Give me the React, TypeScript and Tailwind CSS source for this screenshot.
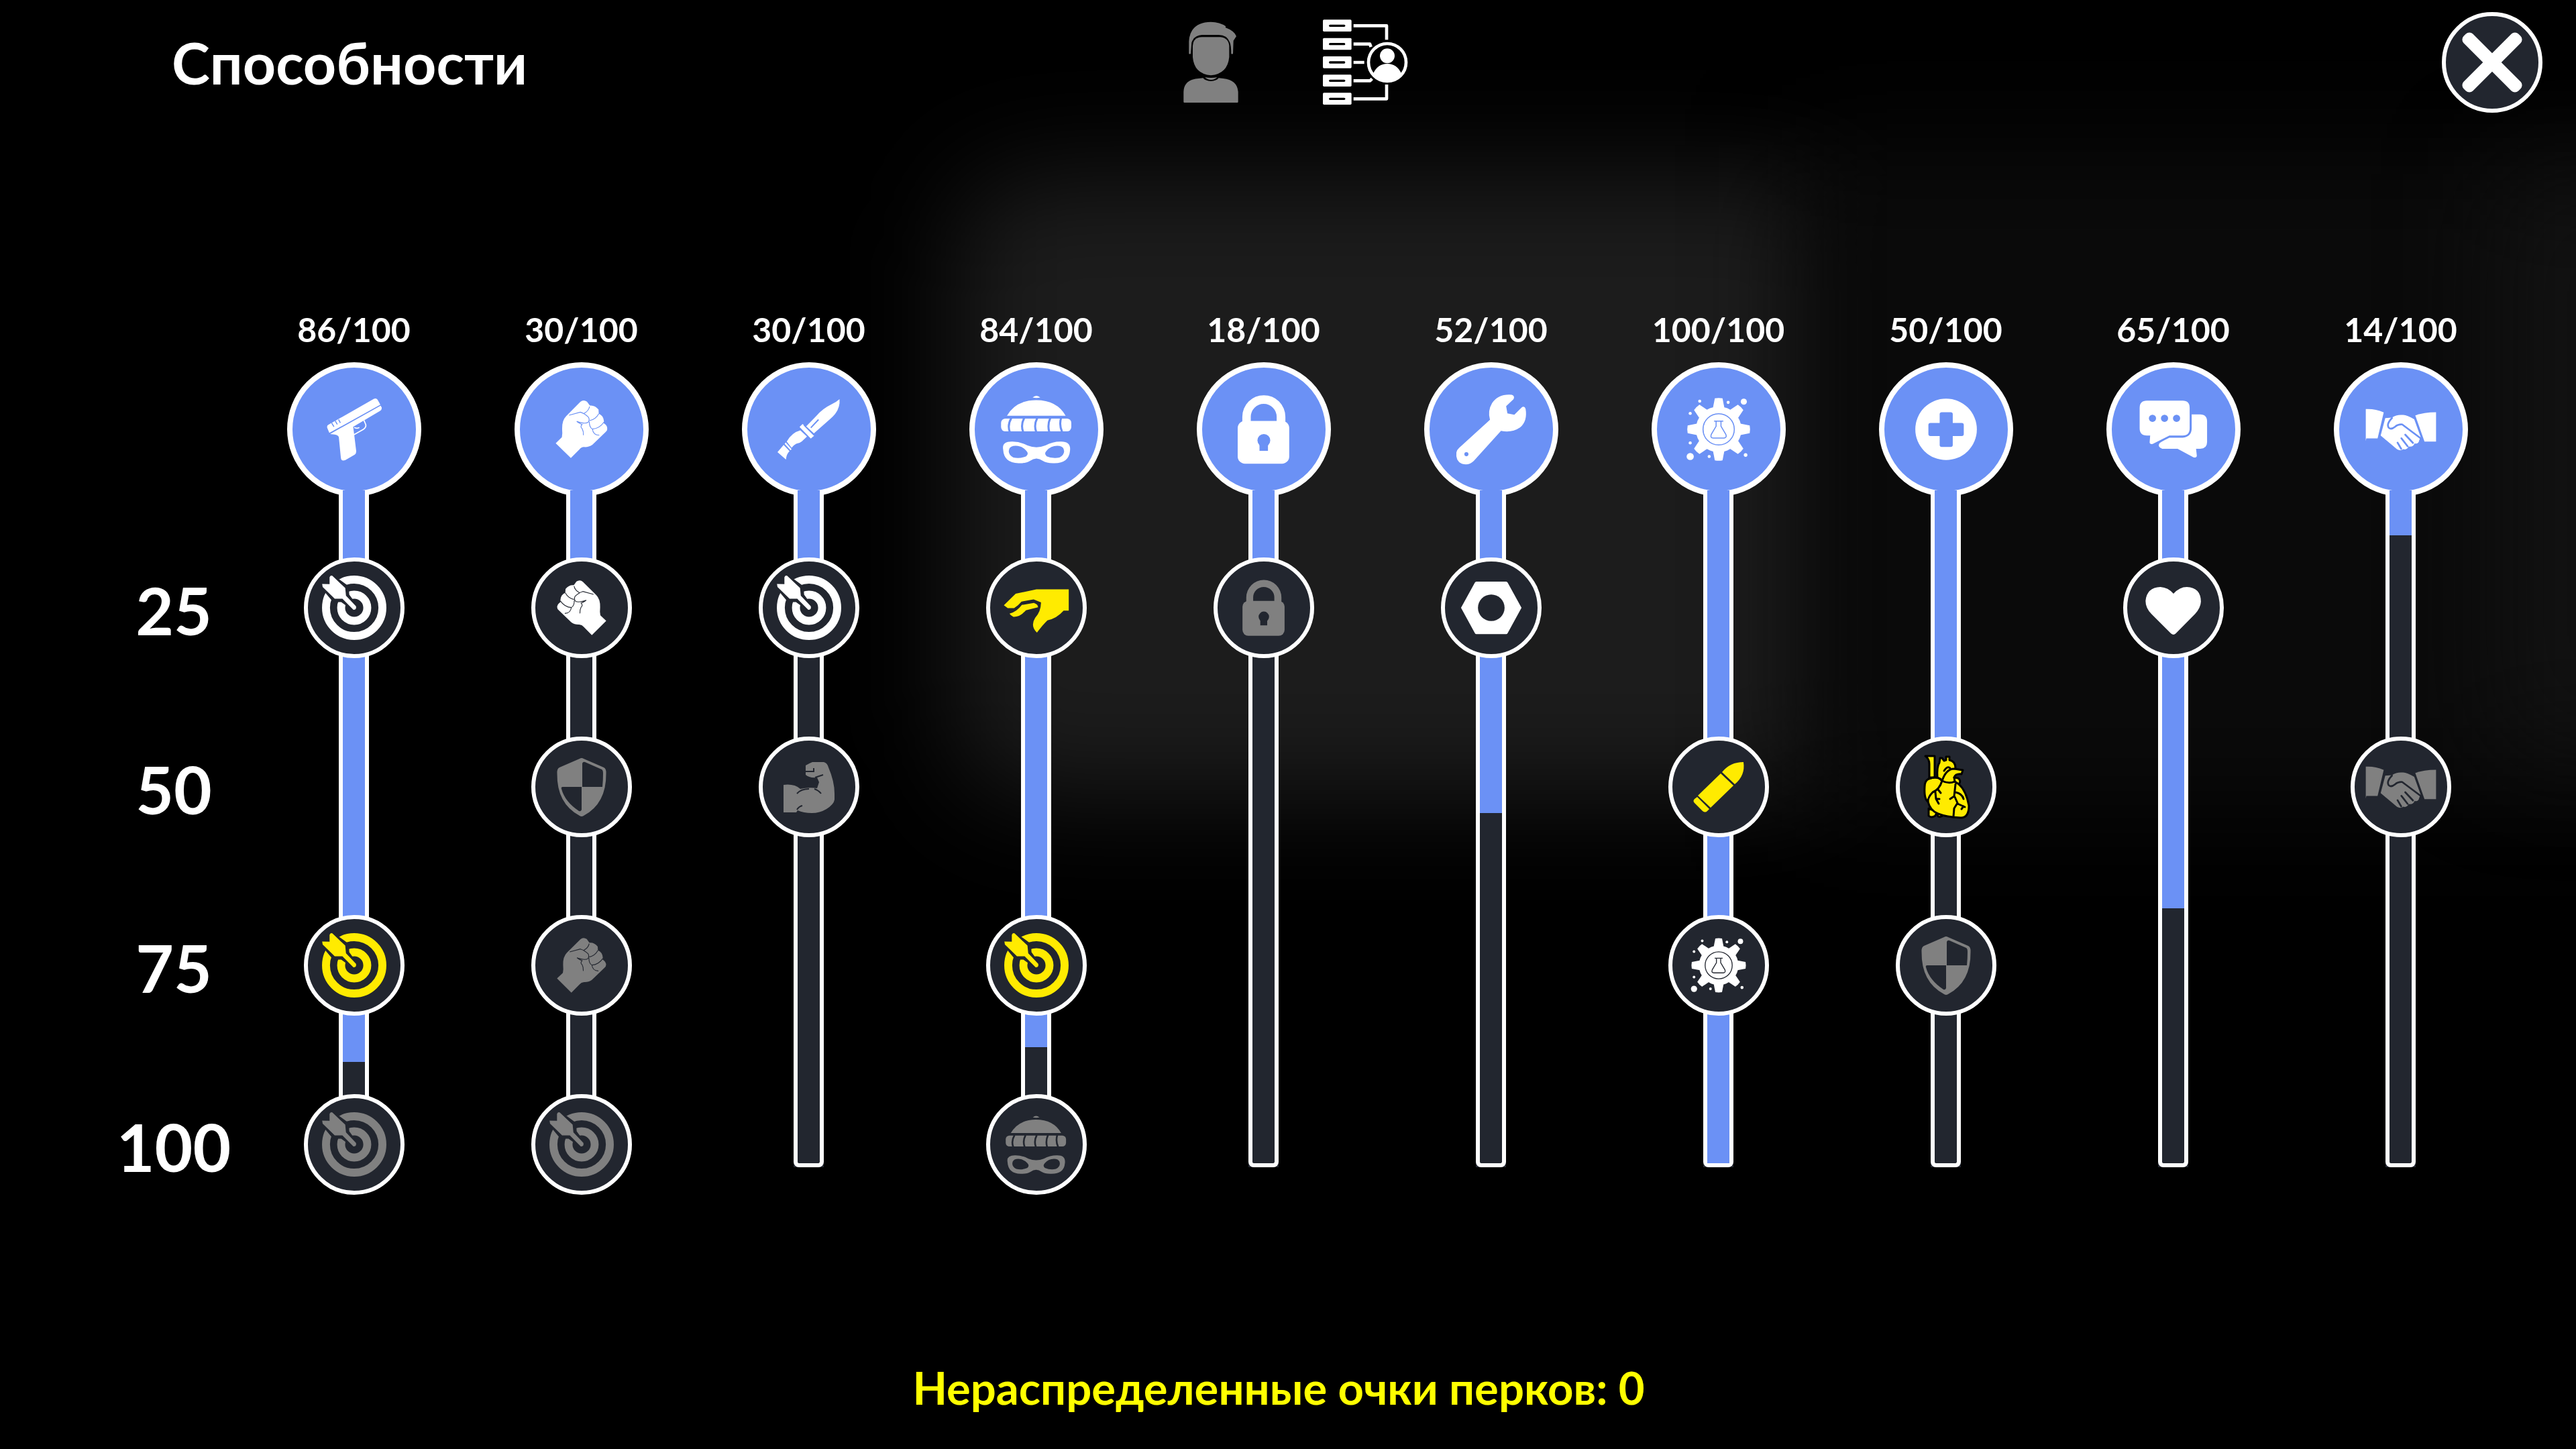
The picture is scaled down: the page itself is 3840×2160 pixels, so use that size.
import type { ReactNode } from "react";

const BLUE = "#6b91f5";
const DARK = "#22262f";

type IconProps = { bg: string };
type IconDef = { viewBox: string; draw: (p: IconProps) => ReactNode };

const icons: Record<string, IconDef> = {
  pistol: {
    viewBox: "177 365 314 314",
    draw: ({ bg }) => (
      <>
        <path d="M229 517Q226 508 234 504L411 403Q420 399 425 406L436 426L237 536Z" />
        <path d="M240 540L437 430L441 436Q443 445 435 450L330 512L334 543L342 608Q342 617 336 621L300 642Q283 648 282 633L274 552Q270 543 258 542Z" />
        <path d="M246 497l9 15M260 489l8 14M273 484l7 13" stroke={bg} strokeWidth="4" />
        <path d="M333 543L370 522Q382 513 379 503L372 487M334 515Q345 520 354 515" fill="none" stroke="currentColor" strokeWidth="4.5" />
      </>
    ),
  },
  fist: {
    viewBox: "1063 365 314 314",
    draw: ({ bg }) => (
      <>
        <path d="M1119 576L1143 553Q1146 540 1144 520Q1143 487 1160 470L1215 415Q1227 405 1241 414L1252 429Q1272 427 1286 445L1287 461Q1305 468 1307 490L1306 498Q1322 508 1320 522Q1320 528 1313 533L1262 582Q1248 592 1230 591Q1218 592 1212 600L1178 634Z" />
        <path
          d="M1171 467L1215 455Q1232 460 1247 475Q1252 485 1246 494Q1235 503 1201 491Q1216 501 1222 503Q1213 512 1222 519Q1228 530 1227 545M1251 433Q1248 450 1229 460M1287 461Q1275 483 1251 488M1307 494Q1290 519 1262 521Q1250 515 1250 492M1262 520Q1265 545 1289 545"
          fill="none"
          stroke={bg}
          strokeWidth="3"
        />
      </>
    ),
  },
  knife: {
    viewBox: "173 365 314 314",
    draw: ({ bg }) => (
      <>
        <path d="M319 510L358 470Q385 440 415 426Q436 416 449 404Q452 435 432 462Q424 472 412 482L349 538Z" />
        <path d="M337 516L367 484" stroke={bg} strokeWidth="5" />
        <path d="M293 513L305 501L350 547L337 558Z" />
        <path d="M310 506L350 546" stroke={bg} strokeWidth="3" />
        <path d="M296 526L322 550L302 569Q293 577 280 578Q270 583 262 594L243 570Q262 535 296 526Z" />
        <path d="M239 573L262 599L258 604L235 579Z" />
        <path d="M231 583L254 607Q241 620 240 640L207 611Z" />
      </>
    ),
  },
  thief: {
    viewBox: "1058 365 314 314",
    draw: ({ bg }) => (
      <>
        <path d="M1200 398Q1215 384 1230 398Q1215 401 1200 398Z" />
        <path d="M1100 469Q1135 408 1214 408Q1295 408 1329 469Z" />
        <rect x="1077" y="480" width="274" height="50" rx="17" />
        <path
          d="M1117 478Q1101 505 1111 532M1167 478Q1153 505 1163 532M1218 478Q1204 505 1214 532M1269 478Q1257 505 1265 532M1311 478Q1303 505 1315 532"
          fill="none"
          stroke={bg}
          strokeWidth="8"
        />
        <path
          fillRule="evenodd"
          d="M1085 600Q1080 570 1118 570Q1150 569 1180 585Q1215 599 1250 585Q1280 569 1312 570Q1350 570 1346 605Q1342 654 1285 654Q1255 655 1240 645Q1215 626 1190 645Q1175 655 1145 654Q1088 654 1085 600ZM1107 607Q1108 590 1125 587Q1155 583 1175 605Q1187 617 1175 627Q1150 638 1125 632Q1107 622 1107 607ZM1323 607Q1322 590 1305 587Q1275 583 1255 605Q1243 617 1255 627Q1280 638 1305 632Q1323 622 1323 607Z"
        />
      </>
    ),
  },
  lock: {
    viewBox: "167 365 314 314",
    draw: ({ bg }) => (
      <>
        <path d="M240 510V473A84 84 0 0 1 408 473V510H374V473A50 50 0 0 0 273 473V510Z" />
        <rect x="222" y="489" width="201" height="167" rx="28" />
        <g fill={bg}>
          <circle cx="324" cy="565" r="25" />
          <rect x="307" y="578" width="33" height="28" />
        </g>
      </>
    ),
  },
  wrench: {
    viewBox: "1053 365 314 314",
    draw: ({ bg }) => (
      <>
        <path d="M1205 485Q1195 450 1213 420Q1237 383 1290 387Q1303 392 1297 404L1268 432L1273 460L1300 465L1329 436Q1340 430 1344 442Q1352 490 1322 515Q1290 537 1248 528L1142 645Q1122 665 1095 656Q1070 645 1074 612Q1076 602 1085 594Z" />
        <circle cx="1113" cy="619" r="8" fill={bg} />
      </>
    ),
  },
  gear: {
    viewBox: "162 365 314 314",
    draw: ({ bg }) => (
      <>
        <circle cx="319" cy="522" r="89" />
        {[0, 45, 90, 135, 180, 225, 270, 315].map((a) => (
          <path key={a} d="M304 401Q319 398 334 401L341 437H297Z" transform={`rotate(${a} 319 522)`} />
        ))}
        <circle cx="319" cy="522" r="61" fill="none" stroke={bg} strokeWidth="4" />
        <path
          d="M301 490H337M309 490V510L290 542Q285 556 298 556H340Q352 554 347 542L328 510V490"
          fill="none"
          stroke={bg}
          strokeWidth="4"
        />
        <circle cx="245" cy="412" r="6" />
        <circle cx="208" cy="460" r="6" />
        <circle cx="356" cy="417" r="6" />
        <circle cx="417" cy="414" r="12" />
        <circle cx="208" cy="575" r="6" />
        <circle cx="208" cy="628" r="14" />
        <circle cx="282" cy="628" r="6" />
        <circle cx="424" cy="622" r="7" />
      </>
    ),
  },
  medic: {
    viewBox: "1047 365 314 314",
    draw: ({ bg }) => (
      <>
        <circle cx="1204" cy="522" r="120" />
        <g fill={bg}>
          <rect x="1179" y="455" width="51" height="136" rx="8" />
          <rect x="1135" y="497" width="138" height="51" rx="8" />
        </g>
      </>
    ),
  },
  chat: {
    viewBox: "209 365 314 314",
    draw: ({ bg }) => (
      <>
        <path d="M262 410H402Q429 410 429 438V518Q429 546 402 546H350L285 579Q272 581 273 572L275 546H262Q234 546 234 518V438Q234 410 262 410Z" />
        <path d="M437 464H470Q497 464 497 492V572Q497 598 470 598H454L457 625Q456 635 444 631L382 598H322Q304 590 310 578Q313 573 350 555H402Q437 550 437 518Z" />
        <g fill={bg}>
          <circle cx="284" cy="479" r="14" />
          <circle cx="331" cy="479" r="14" />
          <circle cx="378" cy="479" r="14" />
        </g>
      </>
    ),
  },
  handshake: {
    viewBox: "1094 365 314 314",
    draw: ({ bg }) => (
      <>
        <path d="M1114 443Q1150 441 1184 456L1160 557H1116L1114 568Z" />
        <path d="M1388 455Q1340 455 1307 468L1343 570H1388Z" />
        <path d="M1190 478L1216 476Q1235 463 1260 466Q1275 467 1303 483L1328 552L1322 566Q1320 580 1304 577Q1300 592 1281 589Q1274 604 1260 599Q1250 608 1236 600L1172 546Z" />
        <path
          d="M1216 478Q1194 500 1203 515Q1212 525 1228 512Q1240 502 1256 503L1332 560M1268 543L1298 575M1253 557L1277 588M1238 574L1252 598"
          fill="none"
          stroke={bg}
          strokeWidth="7"
          strokeLinecap="round"
        />
      </>
    ),
  },
  target: {
    viewBox: "177 1062 314 314",
    draw: ({ bg }) => (
      <>
        <circle cx="334" cy="1219" r="110" fill="none" stroke="currentColor" strokeWidth="31" />
        <circle cx="334" cy="1219" r="51" fill="none" stroke="currentColor" strokeWidth="31" />
        <path
          d="M213 1130L243 1100L300 1142L302 1172L336 1219L288 1184L258 1184Z"
          fill={bg}
          stroke={bg}
          strokeWidth="26"
          strokeLinejoin="round"
        />
        <path d="M209 1126L238 1127L238 1100Q243 1089 252 1097L299 1142L302 1172L341 1213Q344 1227 331 1227L288 1184L258 1184L211 1138Z" />
      </>
    ),
  },
  grab: {
    viewBox: "1058 1062 314 314",
    draw: () => (
      <>
        <path d="M1341 1147V1230H1321Q1295 1260 1258 1268Q1240 1285 1217 1316Q1190 1290 1210 1258Q1232 1235 1233 1198L1204 1186L1157 1195Q1145 1210 1128 1220H1103L1088 1209L1134 1164L1215 1147Z" />
        <path d="M1110 1242Q1138 1235 1158 1208L1205 1200Q1222 1206 1221 1217L1174 1229Q1150 1256 1125 1254Q1115 1250 1110 1242Z" />
      </>
    ),
  },
  nut: {
    viewBox: "1053 1062 314 314",
    draw: ({ bg }) => (
      <>
        <path d="M1152 1117H1268Q1272 1117 1274 1121L1328 1219L1274 1318Q1272 1322 1268 1322H1152Q1148 1322 1146 1318L1092 1219L1146 1121Q1148 1117 1152 1117Z" />
        <circle cx="1210" cy="1219" r="52" fill={bg} />
      </>
    ),
  },
  heart: {
    viewBox: "209 1062 314 314",
    draw: () => (
      <path d="M366 1164Q390 1138 418 1138Q472 1140 473 1195Q472 1220 450 1243L375 1319Q366 1328 356 1319L280 1243Q257 1220 257 1192Q262 1140 315 1138Q345 1140 366 1164Z" />
    ),
  },
  shield: {
    viewBox: "-60 -60 120 120",
    draw: ({ bg }) => (
      <>
        <path d="M-3 -42Q0 -44 3 -42L33 -29Q37 -27 36.500 -20Q37 25 3 43Q0 45 -3 43Q-37 25 -36.500 -20Q-37 -27 -33 -29Z" />
        <path
          d="M1 0V-35Q2 -38 5 -37L30 -26Q32 -25 32 -20Q32 -10 31 0ZM0 0V34Q-1 37 -4 36Q-25 22 -30 3Q-31 0 -28 0Z"
          fill={bg}
        />
      </>
    ),
  },
  muscle: {
    viewBox: "-60 -60 120 120",
    draw: ({ bg }) => (
      <>
        <path d="M-38 -3Q-22 -5 -13 3Q0 0 12 2L15 -7L12 -14Q0 -13 -5 -18V-32Q0 -35 5 -37H22Q27 -36 29 -29Q38 -8 38 10V19Q37 26 26 33Q16 39 4 39Q-8 39 -17 35L-19 38H-38Z" />
        <path
          d="M-18 10Q-12 3 0 3M18 10Q14 5 8 3M-18 34Q-15 29 -10 28M-6 -23H7V-28M9 -14L21 -18"
          fill="none"
          stroke={bg}
          strokeWidth="2"
        />
      </>
    ),
  },
  bullet: {
    viewBox: "-60 -60 120 120",
    draw: () => (
      <>
        <path d="M5 -22Q17 -37 37 -37Q40 -17 24 -4Z" />
        <path d="M3 -20L22 -2L-12 31L-31 13Z" />
        <path d="M-32 15L-14 33L-17 36Q-20 39 -24 36L-36 24Q-39 21 -36 18Z" />
      </>
    ),
  },
  organ: {
    viewBox: "-60 -60 120 120",
    draw: () => (
      <g stroke="#000" strokeWidth="3" strokeLinejoin="round" strokeLinecap="round">
        <path d="M-31 -46H-17V-14H-25V-34Q-25 -42 -31 -46Z" />
        <path d="M-26 32V43Q-22 47 -16 43L-14 38L-12 44Q-8 46 -4 42Z" />
        <path d="M-13 -14Q-14 -30 -10 -36L-9 -43H-6L-3 -39L0 -40V-45H5V-40Q14 -38 14 -28L6 -20Q0 -12 -6 -10Z" />
        <path d="M-26 -12Q-12 -17 -6 -9Q0 -27 12 -27L25 -25L23 -19Q14 -20 12 -14L18 -13Q23 -9 19 -4Q30 6 34 28Q34 46 22 46Q0 45 -12 40Q-24 35 -27 22Q-33 18 -32 0Q-32 -9 -26 -12Z" />
        <path
          d="M-26 -12Q-12 -17 -6 -9Q-10 4 -20 8Q-27 15 -27 22M-6 -9Q4 -4 13 -8L12 -14M13 -8L19 -4M14 -4L12 14L6 18M13 15L17 24L12 32L11 44M17 25L28 30M23 33L26 29M14 8Q24 10 26 18M-16 8L-15 18L-10 18M-15 18L-11 25M-12 4L-8 9M-3 -24Q2 -32 6 -28"
          fill="none"
        />
      </g>
    ),
  },
};

const tones = {
  white: "text-white",
  gray: "text-[#808080]",
  yellow: "text-[#ffeb00]",
};

function Icon({ name, bg, size = 120, flip }: { name: string; bg: string; size?: number; flip?: boolean }) {
  const icon = icons[name];
  return (
    <svg
      viewBox={icon.viewBox}
      fill="currentColor"
      aria-hidden="true"
      className={flip ? "-scale-x-100" : ""}
      style={{ width: size, height: size }}
    >
      {icon.draw({ bg })}
    </svg>
  );
}

type Perk = { at: number; icon: string; tone: keyof typeof tones; size?: number; flip?: boolean };
type Skill = { id: string; name: string; value: number; perks: Perk[] };

const skills: Skill[] = [
  {
    id: "pistol",
    name: "Стрельба",
    value: 86,
    perks: [
      { at: 25, icon: "target", tone: "white" },
      { at: 75, icon: "target", tone: "yellow" },
      { at: 100, icon: "target", tone: "gray" },
    ],
  },
  {
    id: "fist",
    name: "Рукопашный бой",
    value: 30,
    perks: [
      { at: 25, icon: "fist", tone: "white", size: 114, flip: true },
      { at: 50, icon: "shield", tone: "gray" },
      { at: 75, icon: "fist", tone: "gray", size: 114 },
      { at: 100, icon: "target", tone: "gray" },
    ],
  },
  {
    id: "knife",
    name: "Холодное оружие",
    value: 30,
    perks: [
      { at: 25, icon: "target", tone: "white" },
      { at: 50, icon: "muscle", tone: "gray" },
    ],
  },
  {
    id: "thief",
    name: "Воровство",
    value: 84,
    perks: [
      { at: 25, icon: "grab", tone: "yellow" },
      { at: 75, icon: "target", tone: "yellow" },
      { at: 100, icon: "thief", tone: "gray", size: 103 },
    ],
  },
  { id: "lock", name: "Взлом", value: 18, perks: [{ at: 25, icon: "lock", tone: "gray", size: 98 }] },
  { id: "wrench", name: "Ремонт", value: 52, perks: [{ at: 25, icon: "nut", tone: "white" }] },
  {
    id: "gear",
    name: "Наука",
    value: 100,
    perks: [
      { at: 50, icon: "bullet", tone: "yellow" },
      { at: 75, icon: "gear", tone: "white", size: 104 },
    ],
  },
  {
    id: "medic",
    name: "Медицина",
    value: 50,
    perks: [
      { at: 50, icon: "organ", tone: "yellow" },
      { at: 75, icon: "shield", tone: "gray" },
    ],
  },
  { id: "chat", name: "Красноречие", value: 65, perks: [{ at: 25, icon: "heart", tone: "white" }] },
  { id: "handshake", name: "Торговля", value: 14, perks: [{ at: 50, icon: "handshake", tone: "gray" }] },
];

// The scale starts under the round head, so the visible track is shorter than 0–100.
const SCALE = 1089;
const HIDDEN = 85;

function fillHeight(value: number) {
  return Math.min(Math.round((value / 100) * SCALE) - HIDDEN, 1003);
}

function perkTop(at: number) {
  return Math.round(((at - 25) / 25) * 266.6) + 100;
}

function SkillColumn({ skill }: { skill: Skill }) {
  return (
    <li className="flex flex-col items-center">
      <span className="text-[50px] leading-[64px]">{skill.value}/100</span>
      <button
        type="button"
        aria-label={skill.name}
        className="mt-[17px] flex size-[200px] items-center justify-center rounded-full border-8 border-white bg-[#6b91f5]"
      >
        <Icon name={skill.id} bg={BLUE} />
      </button>
      <div className="relative -mt-[9px] h-[1009px] w-[45px] bg-[#22262f]">
        <div
          role="progressbar"
          aria-label={skill.name}
          aria-valuenow={skill.value}
          className="h-full rounded-b-lg border-6 border-t-0 border-white"
        >
          <div className="bg-[#6b91f5]" style={{ height: fillHeight(skill.value) }} />
        </div>
        {skill.perks.map((perk) => (
          <button
            key={perk.at}
            type="button"
            aria-label={`${skill.name}: ${perk.at}`}
            className={`absolute left-1/2 flex size-[150px] -translate-x-1/2 items-center justify-center rounded-full border-6 border-white bg-[#22262f] ${tones[perk.tone]}`}
            style={{ top: perkTop(perk.at) }}
          >
            <Icon name={perk.icon} bg={DARK} size={perk.size} flip={perk.flip} />
          </button>
        ))}
      </div>
    </li>
  );
}

function PersonIcon() {
  return (
    <svg viewBox="123 87 384 384" fill="currentColor" className="size-32" aria-hidden="true">
      <path d="M217 240V185Q222 100 315 98Q355 98 382 118L380 123Q420 138 429 162L416 182L414 240Q410 243 406 240Q406 205 400 190Q388 156 350 156H275Q240 158 229 190L225 240Q221 243 217 240Z" />
      <path d="M234 205Q236 167 275 166H358Q394 170 397 205V255Q390 330 315 337Q240 330 234 255Z" />
      <path d="M288 346Q315 350 344 346Q330 358 315 357Q300 357 288 346Z" />
      <path d="M193 455V410Q195 355 260 351L280 349Q290 362 315 363Q340 362 350 349L370 351Q432 357 437 410V455Q437 459 433 459H197Q193 459 193 455Z" />
    </svg>
  );
}

function TreeIcon() {
  return (
    <svg viewBox="813 87 384 384" fill="currentColor" className="size-32" aria-hidden="true">
      {[88, 170, 252, 334, 415].map((y) => (
        <g key={y}>
          <rect x="816" y={y} width="128" height="53" rx="5" />
          <rect x="843" y={y + 22} width="73" height="10" rx="5" fill="#000" />
        </g>
      ))}
      <g fill="none" stroke="currentColor" strokeWidth="14" strokeLinejoin="round">
        <path d="M953 115H1101V178M953 197H1026L1031 210M953 279H1001M953 361H1027L1036 352M953 442H1101V378" />
        <circle cx="1104" cy="279" r="84" />
      </g>
      <circle cx="1104" cy="250" r="33" />
      <path d="M1042 327Q1062 285 1104 285Q1146 285 1166 327Q1145 362 1104 364Q1063 362 1042 327Z" />
    </svg>
  );
}

export default function App() {
  return (
    <div className="relative isolate flex min-h-screen flex-col overflow-hidden bg-black font-['Lato','Noto_Sans',sans-serif] font-bold text-white">
      <div aria-hidden="true" className="absolute inset-0 -z-10">
        <div className="absolute top-[12%] left-[37%] h-[43%] w-[35%] rounded-[120px] bg-[#1c1c1c] blur-[80px]" />
        <div className="absolute top-[10%] left-[70%] h-[46%] w-[34%] bg-[#0a0a0a] blur-[80px]" />
        <div className="absolute top-[12%] left-[97%] h-[40%] w-[8%] bg-[#121212] blur-[80px]" />
      </div>

      <header className="grid h-[186px] grid-cols-[1fr_auto_1fr] items-center">
        <h1 className="pl-[256px] text-[86px] leading-[104px]">Способности</h1>
        <nav className="flex gap-[102px]">
          <button type="button" aria-label="Персонаж" className="text-[#808080]">
            <PersonIcon />
          </button>
          <button type="button" aria-label="Дерево навыков">
            <TreeIcon />
          </button>
        </nav>
        <div className="flex justify-end pr-[50px]">
          <button
            type="button"
            aria-label="Закрыть"
            className="flex size-[150px] items-center justify-center rounded-full border-6 border-white bg-[#22262f]"
          >
            <svg viewBox="-150 -150 300 300" fill="currentColor" className="size-[100px]" aria-hidden="true">
              <rect x="-173" y="-29" width="346" height="58" rx="22" transform="rotate(45)" />
              <rect x="-173" y="-29" width="346" height="58" rx="22" transform="rotate(-45)" />
            </svg>
          </button>
        </div>
      </header>

      <main className="flex pt-[273px] pr-[92px] pl-40">
        <ol className="mt-[317px] grid h-[1066px] w-[198px] grid-rows-4 items-center text-center text-[98px] leading-[120px]">
          <li>25</li>
          <li>50</li>
          <li>75</li>
          <li>100</li>
        </ol>
        <ul className="grid flex-1 grid-cols-10">
          {skills.map((skill) => (
            <SkillColumn key={skill.id} skill={skill} />
          ))}
        </ul>
      </main>

      <footer className="mt-auto pr-7 pb-[52px] text-center text-[67px] leading-[80px] text-[#ffff00]">
        Нераспределенные очки перков: 0
      </footer>
    </div>
  );
}
